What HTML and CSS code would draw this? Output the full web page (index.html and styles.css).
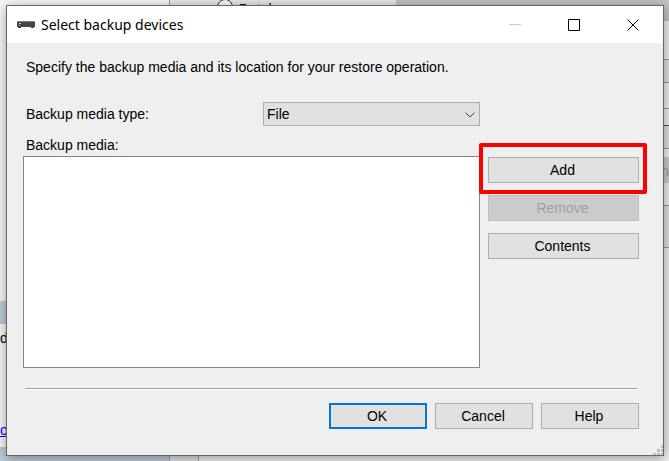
FILE: index.html
```html
<!DOCTYPE html>
<html lang="en">
<head>
  <meta charset="UTF-8">
  <title>Select backup devices</title>
  <link rel="stylesheet" href="styles.css">
</head>
<body>

  <!-- Restore window, mostly hidden behind the dialog -->
  <div class="backdrop">
    <div class="side">
      <div class="side-header"></div>
      <div class="side-text">de</div>
      <a class="side-link" href="#">o</a>
      <div class="side-header side-footer"></div>
    </div>
    <div class="main">
      <div class="source"><span class="radio"></span>Database:</div>
      <div class="fields">
        <div class="field field-top"></div>
        <div class="field field-light"></div>
        <div class="field field-combo"></div>
        <div class="field field-input"></div>
        <div class="field field-gap"></div>
        <div class="field field-combo"></div>
        <div class="field field-timeline"><span>in</span></div>
        <div class="field field-dark"></div>
      </div>
    </div>
  </div>

  <form class="dialog" onsubmit="return false">
    <header class="title-bar">
      <svg class="app-icon" width="18" height="8" viewBox="0 0 18 8">
        <path d="M1 0h16l1 1v5h-1v1h-3V6H4v1H1V6H0V1z" fill="#444"/>
        <path d="M1 0h16v1H1z" fill="#7b7b7b"/>
        <path d="M2 2h2v1H2zM2 4h1v1H2z" fill="#c8c8c8"/>
      </svg>
      <h1>Select backup devices</h1>
      <button type="button" class="caption" aria-label="Minimize" disabled>
        <svg width="12" height="12" viewBox="0 0 12 12"><path d="M0 5.5h12" stroke="#cccccc"/></svg>
      </button>
      <button type="button" class="caption" aria-label="Maximize">
        <svg width="12" height="12" viewBox="0 0 12 12"><path d="M.5.5h11v11H.5z" stroke="#000" fill="none"/></svg>
      </button>
      <button type="button" class="caption" aria-label="Close">
        <svg width="12" height="12" viewBox="0 0 12 12"><path d="M.5.5l11 11M11.5.5l-11 11" stroke="#000"/></svg>
      </button>
    </header>

    <div class="content">
      <p class="intro">Specify the backup media and its location for your restore operation.</p>

      <div class="type-row">
        <label for="mediaType">Backup media type:</label>
        <div class="select-wrap">
          <select id="mediaType">
            <option>File</option>
            <option>URL</option>
          </select>
          <svg class="chevron" width="10" height="6" viewBox="0 0 10 6"><path d="M.5.5L5 5 9.500.5" stroke="#444" fill="none"/></svg>
        </div>
      </div>

      <label class="media-label" for="mediaList">Backup media:</label>
      <div class="media-row">
        <select id="mediaList" class="media-list" size="10"></select>
        <div class="side-buttons">
          <div class="highlight-anchor">
            <button type="button" class="btn">Add</button>
            <span class="highlight"></span>
          </div>
          <button type="button" class="btn" disabled>Remove</button>
          <button type="button" class="btn">Contents</button>
        </div>
      </div>

      <hr>

      <footer class="actions">
        <button type="submit" class="btn btn-default">OK</button>
        <button type="button" class="btn">Cancel</button>
        <button type="button" class="btn">Help</button>
      </footer>
    </div>

    <svg class="grip" width="10" height="10" viewBox="0 0 10 10">
      <path d="M8 0h2v3H8zM4 4h3v3H4zM8 4h2v3H8zM0 8h3v2H0zM4 8h3v2H4zM8 8h2v2H8z" fill="#bfbfbf"/>
    </svg>
  </form>

</body>
</html>
```

FILE: styles.css
```css
:root {
  --face: #efefef;
  --button: #e1e1e1;
  --edge: #adadad;
  --accent: #0078d7;
}

* {
  box-sizing: border-box;
}

html, body {
  margin: 0;
  height: 100%;
  overflow: hidden;
}

body {
  display: flex;
  padding: 5px 5px 5px 6px;
  font-family: "Liberation Sans", Arial, sans-serif;
  font-size: 14px;
  line-height: 16px;
  color: #000;
}

/* Window behind the dialog */
.backdrop {
  position: absolute;
  inset: 0;
  display: flex;
  overflow: hidden;
  background: #f0f0f0;
}

.side {
  display: flex;
  flex-direction: column;
  width: 170px;
  padding-top: 301px;
  background: #fafafa;
  border-right: 1px solid #a0a0a0;
}

.side-header {
  height: 23px;
  background: #bfcddb;
}

.side-text {
  padding-top: 6px;
}

.side-link {
  margin-top: 76px;
  color: #0000ff;
}

.side-footer {
  margin-top: auto;
  height: 14px;
}

.main {
  display: flex;
  flex: 1;
}

.source {
  display: flex;
  gap: 6px;
  width: 226px;
  padding: 1px 0 0 47px;
  background: linear-gradient(to right, #e4e4e4 28px, #a0a0a0 28px, #a0a0a0 29px, #f0f0f0 29px) bottom / 100% 20px no-repeat #e8e8e8;
}

.radio {
  width: 16px;
  height: 16px;
  margin-top: -2px;
  border: 1px solid #333;
  border-radius: 50%;
  background: #fff;
}

.fields {
  flex: 1;
}

.field {
  border-bottom: 1px solid #999;
}

.field-top {
  height: 21px;
  background: #c3c3c3;
  border-bottom: none;
}

.field-light {
  height: 39px;
  background: #f0f0f0;
}

.field-combo {
  height: 23px;
  background: #e1e1e1;
}

.field-input {
  height: 26px;
  background: #f0f0f0;
}

.field-gap {
  height: 17px;
  border-color: #555;
}

.field-timeline {
  display: flex;
  height: 57px;
  padding: 8px 0 22px;
  background: #f0f0f0;
}

.field-timeline span {
  width: 100%;
  margin-right: -6px;
  padding-top: 6px;
  text-align: right;
  color: #999;
  background: #cccccc;
  flex-shrink: 0;
}

.field-dark {
  height: 42px;
  background: #e1e1e1;
}

/* Dialog */
.dialog {
  position: relative;
  display: flex;
  flex: 1;
  flex-direction: column;
  background: var(--face);
  border: 1px solid #666;
  box-shadow: 0 2px 12px rgba(0, 0, 0, 0.4);
}

.title-bar {
  display: flex;
  align-items: center;
  height: 37px;
  padding: 0 1px 0 10px;
  background: #fff;
}

.title-bar h1 {
  flex: 1;
  margin: 0 0 0 6px;
  font-family: "Noto Sans", "Open Sans", sans-serif;
  font-size: 14px;
  font-weight: 400;
}

.caption {
  display: flex;
  align-items: center;
  justify-content: center;
  width: 59px;
  height: 37px;
  padding: 0;
  border: none;
  background: transparent;
}

.content {
  display: flex;
  flex: 1;
  flex-direction: column;
  padding: 16px 24px 26px 16px;
}

.intro {
  margin: 0 0 27px 3px;
}

.type-row {
  display: flex;
  align-items: center;
  justify-content: space-between;
  margin-left: 3px;
  padding-right: 159px;
}

.select-wrap {
  position: relative;
  width: 217px;
}

.select-wrap select {
  display: block;
  width: 100%;
  height: 24px;
  padding: 0 3px;
  appearance: none;
  font: inherit;
  color: #000;
  background: var(--button);
  border: 1px solid var(--edge);
  border-radius: 0;
}

.chevron {
  position: absolute;
  top: 10px;
  right: 5px;
  pointer-events: none;
}

.media-label {
  margin: 11px 0 3px 3px;
}

.media-row {
  display: flex;
  flex: 1;
  gap: 8px;
}

.media-list {
  flex: 1;
  height: 100%;
  background: #fff;
  border: 1px solid #828790;
  border-radius: 0;
}

.side-buttons {
  display: flex;
  flex-direction: column;
  gap: 12px;
  width: 151px;
  padding-top: 1px;
}

.btn {
  width: 100%;
  height: 26px;
  padding: 0 2px 0 0;
  font: inherit;
  color: #000;
  background: var(--button);
  border: 1px solid var(--edge);
}

.btn:disabled {
  color: #a0a0a0;
  background: #cccccc;
  border-color: #bfbfbf;
}

.btn-default {
  border: 2px solid var(--accent);
}

.highlight-anchor {
  position: relative;
  display: flex;
}

/* Red marker around the Add button */
.highlight {
  position: absolute;
  inset: -14px -8px -11px -9px;
  border: 4px solid #ff0000;
  border-radius: 2px;
  pointer-events: none;
}

hr {
  align-self: stretch;
  height: 2px;
  margin: 20px 2px 13px;
  border: none;
  border-top: 1px solid #a0a0a0;
  border-bottom: 1px solid #fff;
}

.actions {
  display: flex;
  justify-content: flex-end;
  gap: 8px;
}

.actions .btn {
  width: 98px;
}

.grip {
  position: absolute;
  right: 0;
  bottom: 0;
}
```
